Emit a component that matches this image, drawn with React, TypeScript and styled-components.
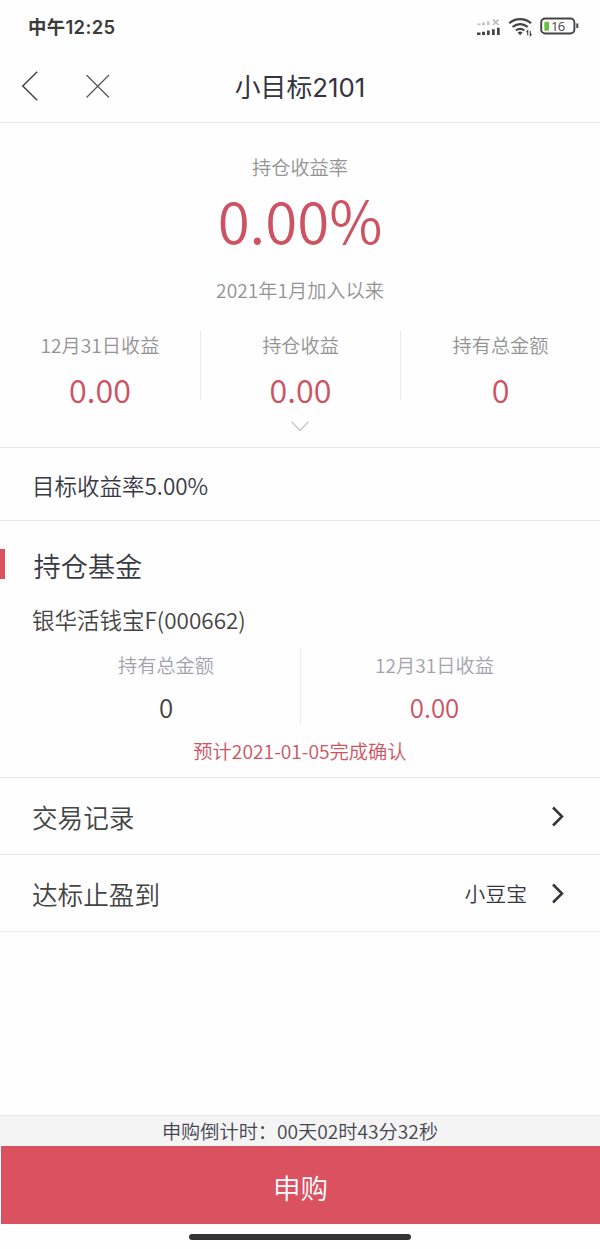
import React from "react";
import styled, { createGlobalStyle } from "styled-components";

const GlobalStyle = createGlobalStyle`
  * { box-sizing: border-box; }
  body {
    margin: 0;
    background: #fefefe;
    font-family: "Noto Sans CJK SC", sans-serif;
    font-weight: 350;
    color: #444;
  }
`;

const RED = "#cd5362";
const LINE = "#e9e9ea";

const Screen = styled.div`
  display: flex;
  flex-direction: column;
  width: 600px;
  height: 1249px;
  overflow: hidden;
`;

const StatusBar = styled.header`
  display: flex;
  align-items: center;
  justify-content: space-between;
  height: 52px;
  padding: 0 21px 0 28px;
`;

const Clock = styled.span`
  font-family: Inter, "Noto Sans CJK SC", sans-serif;
  font-size: 18.4px;
  font-weight: 600;
  line-height: 28px;
  letter-spacing: 0.35px;
  padding-top: 1px;
  color: #3b3b3b;
`;

const NavBar = styled.nav`
  display: grid;
  grid-template-columns: 150px 1fr 150px;
  align-items: center;
  height: 71px;
  border-bottom: 1px solid ${LINE};
`;

const NavIcons = styled.div`
  display: flex;
  align-items: center;
  gap: 46px;
  padding: 0 0 2px 21px;
`;

const Title = styled.h1`
  margin: 0;
  font-family: Inter, "Noto Sans CJK SC", sans-serif;
  font-size: 25.8px;
  font-weight: 400;
  line-height: 36px;
  padding-top: 1px;
  text-align: center;
  color: #34343f;
`;

const Summary = styled.section`
  display: flex;
  flex-direction: column;
  align-items: center;
  height: 325px;
  padding-top: 30px;
  border-bottom: 1px solid ${LINE};
`;

const Label = styled.div<{ $cool?: boolean }>`
  font-size: 19.2px;
  line-height: 28px;
  color: ${(p) => (p.$cool ? "#a2a2ab" : "#939393")};
`;

const Rate = styled.div`
  font-size: 58.2px;
  line-height: 58px;
  margin: 9px 0 28px;
  color: ${RED};
`;

const Stats = styled.div<{ $columns: number; $height: number }>`
  display: grid;
  grid-template-columns: repeat(${(p) => p.$columns}, 1fr);
  grid-template-rows: ${(p) => p.$height}px;
  width: 100%;
`;

const Stat = styled.div`
  display: flex;
  flex-direction: column;
  align-items: center;
  & + & {
    border-left: 1px solid ${LINE};
  }
`;

const StatValue = styled.div<{ $size: number; $gap: number; $dark?: boolean }>`
  font-size: ${(p) => p.$size}px;
  line-height: 40px;
  margin-top: ${(p) => p.$gap}px;
  color: ${(p) => (p.$dark ? "#444" : RED)};
`;

const StatsWrap = styled.div`
  width: 100%;
  margin-top: 27px;
`;

const Expand = styled.div`
  display: flex;
  margin-top: 21px;
`;

const Target = styled.section`
  display: flex;
  align-items: center;
  height: 73px;
  padding: 2px 32px 0;
  border-bottom: 1px solid ${LINE};
  font-size: 22.5px;
  color: #393945;
`;

const Holdings = styled.section`
  height: 257px;
  padding-top: 28px;
  border-bottom: 1px solid ${LINE};
`;

const SectionTitle = styled.h2`
  display: flex;
  align-items: center;
  height: 30px;
  margin: 0;
  padding: 2px 0 0 28.5px;
  border-left: 5px solid #da5160;
  font-size: 27.2px;
  font-weight: 350;
  line-height: 30px;
  color: #393945;
`;

const FundName = styled.div`
  margin: 23px 0 12px 32px;
  font-size: 22.5px;
  line-height: 34px;
  color: #444;
`;

const FundStats = styled.div`
  padding: 0 32px;
`;

const Notice = styled.div`
  margin-top: 13px;
  font-size: 19.25px;
  line-height: 28px;
  text-align: center;
  color: ${RED};
`;

const FundLabel = styled(Label)`
  padding-top: 3px;
`;

const LinkRow = styled.div`
  display: flex;
  align-items: center;
  justify-content: space-between;
  height: 77px;
  padding: 0 36px 0 32px;
  border-bottom: 1px solid ${LINE};
  font-size: 25.6px;
`;

const RowEnd = styled.span`
  display: flex;
  align-items: center;
  gap: 24px;
  font-size: 20.8px;
  color: #34343f;
`;

const Spacer = styled.div`
  flex: 1;
`;

const Countdown = styled.div`
  height: 31px;
  border-top: 1px solid ${LINE};
  background: #f4f4f5;
  font-size: 19.2px;
  line-height: 30px;
  text-align: center;
  color: #45454e;
`;

const BuyButton = styled.button`
  height: 78px;
  margin: 0 0 0 1px;
  padding: 3px 0 0;
  border: 0;
  background: #da5160;
  color: #fff;
  font: 350 27.6px/40px "Noto Sans CJK SC", sans-serif;
`;

const HomeArea = styled.footer`
  display: flex;
  justify-content: center;
  height: 25px;
  padding-top: 10px;
`;

const HomeBar = styled.div`
  width: 222px;
  height: 6px;
  border-radius: 3px;
  background: #333;
`;

const StatusIcons = () => (
  <svg width="104" height="24" viewBox="475 14 104 24" fill="none">
    <g fill="#c4c4c4">
      <path d="M477.500 23.600h3v1.700h-3zM482 22.600h3v2.700h-3zM487 21.300h2.500v4H487z" />
    </g>
    <path d="M493 19.500l5.500 5.500M498.500 19.500l-5.500 5.500" stroke="#bbb" strokeWidth="1.700" />
    <g fill="#444">
      <path d="M477 32.600h3.500v2.300H477zM482 31.700h3v3.200h-3zM487 30.500h2.700v4.400H487zM492 29.200h2.700v5.700H492zM497 27.700h2.700v7.200H497z" />
    </g>
    <g stroke="#444" strokeWidth="2.200">
      <path d="M509.200 23.300c6.300-5.600 15.600-5.600 21.900 0" />
      <path d="M512.600 27c4.500-3.900 10.600-3.900 15.100 0" />
      <path d="M515.900 30.500c2.600-2.100 5.900-2.100 8.500 0" />
    </g>
    <path d="M517.600 32.400q2.500-1.700 5 0l-2.500 2.800z" fill="#444" />
    <path d="M527.700 35.300v-4.600l-1.300 1.500M530.300 31v4.600l1.300-1.500" stroke="#444" strokeWidth="1.100" />
    <rect x="541.200" y="18.500" width="33.200" height="15" rx="4" stroke="#444" strokeWidth="1.900" />
    <rect x="544.300" y="21.700" width="4.700" height="9" rx="1" fill="#67c23f" />
    <path d="M577.300 23.500v4.500" stroke="#444" strokeWidth="2" />
    <text x="551" y="31" fontSize="13" fontWeight="500" letterSpacing="-0.800" fontFamily="Open Sans, sans-serif" fill="#444">
      16
    </text>
  </svg>
);

const BackIcon = () => (
  <svg width="18" height="30" viewBox="0 0 18 30" fill="none" stroke="#44444a" strokeWidth="1.500">
    <path d="M16.200 .8L1.800 15l14.400 14.200" />
  </svg>
);

const CloseIcon = () => (
  <svg width="25" height="25" viewBox="0 0 25 25" fill="none" stroke="#55555a" strokeWidth="1.200">
    <path d="M1.500 1l22.500 22.500M24 1L1.500 23.500" />
  </svg>
);

const DownIcon = () => (
  <svg width="18" height="11" viewBox="0 0 18 11" fill="none" stroke="#c6c6cd" strokeWidth="1.300">
    <path d="M.6.8L9 9.500 17.400.8" />
  </svg>
);

const ArrowIcon = () => (
  <svg width="13" height="22" viewBox="0 0 13 22" fill="none" stroke="#34343c" strokeWidth="2.500">
    <path d="M2 2.500l9 9-9 9" />
  </svg>
);

export default function App() {
  return (
    <>
      <GlobalStyle />
      <Screen>
        <StatusBar>
          <Clock>中午12:25</Clock>
          <StatusIcons />
        </StatusBar>
        <NavBar>
          <NavIcons>
            <BackIcon />
            <CloseIcon />
          </NavIcons>
          <Title>小目标2101</Title>
        </NavBar>
        <Summary>
          <Label>持仓收益率</Label>
          <Rate>0.00%</Rate>
          <Label>2021年1月加入以来</Label>
          <StatsWrap>
            <Stats $columns={3} $height={69}>
              <Stat>
                <Label>12月31日收益</Label>
                <StatValue $size={32.3} $gap={10}>0.00</StatValue>
              </Stat>
              <Stat>
                <Label>持仓收益</Label>
                <StatValue $size={32.3} $gap={10}>0.00</StatValue>
              </Stat>
              <Stat>
                <Label>持有总金额</Label>
                <StatValue $size={32.3} $gap={10}>0</StatValue>
              </Stat>
            </Stats>
          </StatsWrap>
          <Expand>
            <DownIcon />
          </Expand>
        </Summary>
        <Target>目标收益率5.00%</Target>
        <Holdings>
          <SectionTitle>持仓基金</SectionTitle>
          <FundName>银华活钱宝F(000662)</FundName>
          <FundStats>
            <Stats $columns={2} $height={76}>
              <Stat>
                <FundLabel $cool>持有总金额</FundLabel>
                <StatValue $size={25.8} $gap={8} $dark>0</StatValue>
              </Stat>
              <Stat>
                <FundLabel $cool>12月31日收益</FundLabel>
                <StatValue $size={25.8} $gap={8}>0.00</StatValue>
              </Stat>
            </Stats>
          </FundStats>
          <Notice>预计2021-01-05完成确认</Notice>
        </Holdings>
        <LinkRow>
          交易记录
          <ArrowIcon />
        </LinkRow>
        <LinkRow>
          达标止盈到
          <RowEnd>
            小豆宝
            <ArrowIcon />
          </RowEnd>
        </LinkRow>
        <Spacer />
        <Countdown>申购倒计时：00天02时43分32秒</Countdown>
        <BuyButton>申购</BuyButton>
        <HomeArea>
          <HomeBar />
        </HomeArea>
      </Screen>
    </>
  );
}
